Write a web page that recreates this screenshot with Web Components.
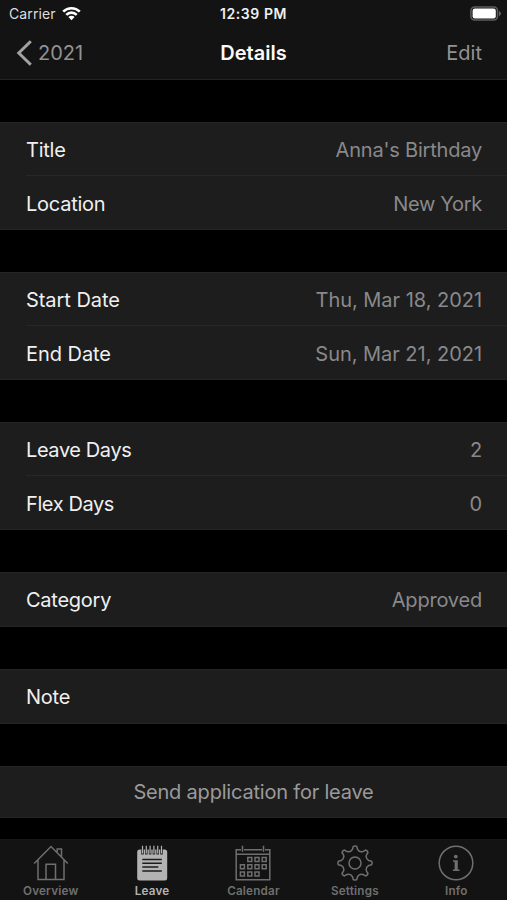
<!DOCTYPE html>
<html lang="en">
<head>
<meta charset="utf-8">
<title>Details</title>
<style>
  html, body { margin: 0; height: 100%; background: #000; }
  body { font-family: Inter, "Liberation Sans", sans-serif; color: #f0f0f0; }
</style>
</head>
<body>
<leave-screen></leave-screen>

<script>
function define(name, html) {
  const template = document.createElement('template');
  template.innerHTML = html;
  customElements.define(name, class extends HTMLElement {
    constructor() {
      super();
      this.attachShadow({ mode: 'open' }).appendChild(template.content.cloneNode(true));
    }
  });
}

// -- status-bar --
define('status-bar', `
  <style>
    :host {
      display: grid; grid-template-columns: 1fr auto 1fr; align-items: center;
      height: 27px; padding: 0 6px 0 9px; box-sizing: border-box;
      font-size: 14px; line-height: 27px;
    }
    .carrier { display: flex; align-items: center; gap: 6px; letter-spacing: 0.1px; color: #dedede; }
    .carrier svg { margin-top: -1px; }
    .time { font-size: 14px; font-weight: 600; letter-spacing: 0.6px; margin-right: 3px; }
    .battery { justify-self: end; margin-top: -1px; }
    svg { display: block; }
  </style>
  <div class="carrier">
    <span>Carrier</span>
    <svg width="19" height="15" viewBox="0 0 19 15" fill="none" stroke="#fff" stroke-width="2.6">
      <path d="M1.2 5.6a11.8 11.8 0 0 1 16.6 0M4.3 8.8a7.4 7.4 0 0 1 10.4 0"/>
      <path d="M9.5 14.2 6.4 11a4.4 4.4 0 0 1 6.2 0z" fill="#fff" stroke="none"/>
    </svg>
  </div>
  <span class="time">12:39 PM</span>
  <svg class="battery" width="31" height="15" viewBox="0 0 31 15">
    <rect x=".9" y=".9" width="26.6" height="13.2" rx="3.8" fill="none" stroke="#5d5d5d" stroke-width="1.5"/>
    <rect x="2.6" y="2.5" width="23.2" height="10" rx="2.3" fill="#fff"/>
    <path d="M29 5v5q2-1 2-2.5T29 5z" fill="#666"/>
  </svg>
`);

// -- nav-bar --
define('nav-bar', `
  <style>
    :host {
      display: grid; grid-template-columns: 1fr auto 1fr; align-items: center;
      height: 53px; padding: 0 25px 1px 16px; box-sizing: border-box;
      border-bottom: 1px solid #222; font-size: 20px; color: #929292;
    }
    .back { display: flex; align-items: center; gap: 6px; }
    .title { font-weight: 600; color: #fafafa; margin-left: 9px; }
    .action { text-align: right; }
    svg { display: block; }
  </style>
  <div class="back">
    <svg width="16" height="26" viewBox="0 0 16 26" fill="none" stroke="#a2a2a2" stroke-width="3">
      <path d="M14.8 1.2 2.8 13l12 11.8"/>
    </svg>
    <slot name="back"></slot>
  </div>
  <span class="title"><slot></slot></span>
  <span class="action"><slot name="action"></slot></span>
`);

// -- cell-group --
define('cell-group', `
  <style>
    :host {
      display: block; background: #1d1d1e; box-sizing: border-box;
      border-top: 1px solid #252526; border-bottom: 1px solid #252526;
    }
    ::slotted(detail-cell:not(:first-child)) { --line: #272728; --drop: 2px; }
  </style>
  <slot></slot>
`);

// -- detail-cell --
define('detail-cell', `
  <style>
    :host { display: block; padding-left: 26px; font-size: 20px; letter-spacing: -0.2px; }
    .row {
      display: flex; align-items: center; justify-content: space-between;
      height: 54px; padding: var(--drop, 0) 25px 0 0; box-sizing: border-box;
      border-top: 1px solid var(--line, transparent); margin-top: -1px;
    }
    .label { letter-spacing: var(--label-spacing, -0.25px); }
    .value { color: #89898b; }
  </style>
  <div class="row">
    <span class="label"><slot></slot></span>
    <span class="value"><slot name="value"></slot></span>
  </div>
`);

// -- action-cell --
define('action-cell', `
  <style>
    :host {
      display: block; height: 50px; line-height: 51px; text-align: center;
      font-size: 20px; letter-spacing: -0.2px; color: #9a9a9b;
    }
  </style>
  <slot></slot>
`);

// -- tab-item --
define('tab-item', `
  <style>
    :host {
      display: flex; flex-direction: column; align-items: center;
      font-size: 11.7px; font-weight: 600; letter-spacing: 0.2px; color: #6f6f6f;
    }
    :host([selected]) { color: #b3b3b3; }
    .label { line-height: 14px; margin-top: 3px; }
    ::slotted(svg) {
      display: block; width: 36px; height: 36px;
      fill: none; stroke: currentColor; stroke-width: 1.5;
    }
  </style>
  <slot name="icon"></slot>
  <span class="label"><slot></slot></span>
`);

// -- tab-bar --
define('tab-bar', `
  <style>
    :host {
      display: grid; grid-template-columns: repeat(5, 1fr);
      height: 61px; padding-top: 5px; box-sizing: border-box;
      background: #131313; border-top: 1px solid #171717;
    }
  </style>
  <slot></slot>
`);

// -- leave-screen --
define('leave-screen', `
  <style>
    :host { display: flex; flex-direction: column; height: 900px; overflow: hidden; background: #000; }
    header { background: #131313; }
    main { flex: 1; display: flex; flex-direction: column; gap: 42px; padding-top: 42px; }
    .dates { --label-spacing: -0.05px; }
    .dates span { letter-spacing: -0.03px; }
  </style>
  <header>
    <status-bar></status-bar>
    <nav-bar><span slot="back">2021</span>Details<span slot="action">Edit</span></nav-bar>
  </header>
  <main>
    <cell-group>
      <detail-cell>Title<span slot="value">Anna's Birthday</span></detail-cell>
      <detail-cell>Location<span slot="value" style="letter-spacing:-0.3px">New York</span></detail-cell>
    </cell-group>
    <cell-group class="dates">
      <detail-cell>Start Date<span slot="value">Thu, Mar 18, 2021</span></detail-cell>
      <detail-cell>End Date<span slot="value">Sun, Mar 21, 2021</span></detail-cell>
    </cell-group>
    <cell-group style="--label-spacing:-0.4px">
      <detail-cell>Leave Days<span slot="value">2</span></detail-cell>
      <detail-cell>Flex Days<span slot="value">0</span></detail-cell>
    </cell-group>
    <cell-group>
      <detail-cell>Category<span slot="value">Approved</span></detail-cell>
    </cell-group>
    <cell-group>
      <detail-cell>Note</detail-cell>
    </cell-group>
    <cell-group>
      <action-cell>Send application for leave</action-cell>
    </cell-group>
  </main>
  <tab-bar>
    <tab-item>
      <svg slot="icon" viewBox="0 0 36 36">
        <path d="M1.2 18.5 18 1.5l16.8 17M5 15v19.5h8V19.2h9.5v15.3H31V15M13 34.5h9.5M24.2 7V4h4.3v7.7"/>
      </svg>
      Overview
    </tab-item>
    <tab-item selected>
      <svg slot="icon" viewBox="0 0 36 36">
        <rect x="3.2" y="4.5" width="30" height="31" rx="2.5" fill="currentColor" stroke="none"/>
        <path d="M8.5 4v5.5M12.3 4v5.5M16.1 4v5.5M19.9 4v5.5M23.7 4v5.5M27.5 4v5.5" stroke="#1c1c1c" stroke-width="2.5"/>
        <path d="M8.5.8v7.8M12.3.8v7.8M16.1.8v7.8M19.9.8v7.8M23.7.8v7.8M27.5.8v7.8" stroke-width="1.2"/>
        <path d="M8.3 14.5h19.5M8.3 18.3h19.5M8.3 22.1h16M8.3 25.9h19.5" stroke="#1c1c1c" stroke-width="1.5"/>
      </svg>
      Leave
    </tab-item>
    <tab-item>
      <svg slot="icon" viewBox="0 0 36 36">
        <path d="M6 4.8H1.2v29.9h33.6V4.8H30M9 4.8h18M1.2 9.3h33.6M7.5.8v6M28.5.8v6"/>
        <path d="M12.8 12.5h4v4h-4zM20 12.5h4v4h-4zM27.2 12.5h4v4h-4zM5.4 19.7h4v4h-4zM12.8 19.7h4v4h-4zM20 19.7h4v4h-4zM27.2 19.7h4v4h-4zM5.4 26.9h4v4h-4zM12.8 26.9h4v4h-4zM20 26.9h4v4h-4z"/>
      </svg>
      Calendar
    </tab-item>
    <tab-item>
      <svg slot="icon" viewBox="0 0 36 36" stroke-linejoin="round">
        <circle cx="18" cy="18" r="6"/>
        <path id="gear"/>
      </svg>
      Settings
    </tab-item>
    <tab-item>
      <svg slot="icon" viewBox="0 0 36 36">
        <circle cx="18" cy="18" r="16.8"/>
        <circle cx="17.8" cy="11.6" r="1.9" fill="currentColor" stroke="none"/>
        <path d="M15 15.2h4.8v9.2h1.7v1.6h-6.6v-1.6h1.7v-7.6H15z" fill="currentColor" stroke="none"/>
      </svg>
      Info
    </tab-item>
  </tab-bar>
`);

// eight rounded teeth: each is a rounded tip, then a curved valley to the next one
const point = (r, deg) => {
  const a = (deg - 90) * Math.PI / 180;
  return (18 + r * Math.cos(a)).toFixed(2) + ' ' + (18 + r * Math.sin(a)).toFixed(2);
};
let gear = 'M' + point(16.7, -6);
for (let i = 0; i < 8; i++) {
  const a = i * 45;
  gear += `Q${point(17.6, a)} ${point(16.7, a + 6)}L${point(14, a + 10)}` +
    `Q${point(11.2, a + 22.5)} ${point(14, a + 35)}L${point(16.7, a + 39)}`;
}
document.querySelector('leave-screen').shadowRoot.getElementById('gear').setAttribute('d', gear + 'Z');
</script>
</body>
</html>
